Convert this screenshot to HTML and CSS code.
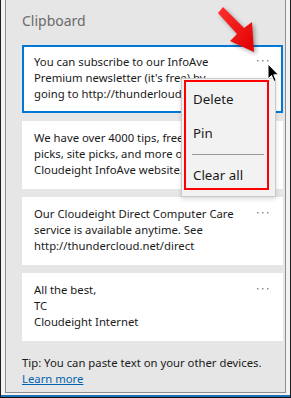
FILE: index.html
```html
<!DOCTYPE html>
<html lang="en">
<head>
  <meta charset="UTF-8">
  <title>Clipboard</title>
  <link rel="stylesheet" href="styles.css">
</head>
<body>
  <div class="screen">
    <div class="panel">
      <h1>Clipboard</h1>

      <!-- clipboard history -->
      <div class="items">
        <div class="item selected">
          <p>You can subscribe to our InfoAve Premium newsletter (it's free) by going to <span class="url">http://thunderloud.net/infoave/newsletter/</span></p>
          <span class="more"><svg width="12" height="2" viewBox="0 0 12 2"><rect x="0" y="0" width="1.5" height="1.5"/><rect x="5" y="0" width="1.5" height="1.5"/><rect x="10" y="0" width="1.5" height="1.5"/></svg></span>
        </div>
        <div class="item">
          <p>We have over 4000 tips, freeware picks, site picks, and more on our Cloudeight InfoAve website.</p>
          <span class="more"><svg width="12" height="2" viewBox="0 0 12 2"><rect x="0" y="0" width="1.5" height="1.5"/><rect x="5" y="0" width="1.5" height="1.5"/><rect x="10" y="0" width="1.5" height="1.5"/></svg></span>
        </div>
        <div class="item">
          <p>Our Cloudeight Direct Computer Care service is available anytime. See http://thundercloud.net/direct</p>
          <span class="more"><svg width="12" height="2" viewBox="0 0 12 2"><rect x="0" y="0" width="1.5" height="1.5"/><rect x="5" y="0" width="1.5" height="1.5"/><rect x="10" y="0" width="1.5" height="1.5"/></svg></span>
        </div>
        <div class="item">
          <p>All the best,<br>TC<br>Cloudeight Internet</p>
          <span class="more"><svg width="12" height="2" viewBox="0 0 12 2"><rect x="0" y="0" width="1.5" height="1.5"/><rect x="5" y="0" width="1.5" height="1.5"/><rect x="10" y="0" width="1.5" height="1.5"/></svg></span>
        </div>
      </div>

      <p class="tip">Tip: You can paste text on your other devices.<br><a href="#">Learn more</a></p>
    </div>
    <div class="taskbar"></div>

    <!-- context menu -->
    <div class="menu">
      <div class="menu-list">
        <div class="menu-item">Delete</div>
        <div class="menu-item">Pin</div>
        <div class="menu-sep"></div>
        <div class="menu-item">Clear all</div>
      </div>
    </div>

    <!-- annotation arrow + mouse pointer -->
    <svg class="arrow" width="48" height="58" viewBox="0 0 48 58">
      <defs>
        <linearGradient id="red" x1="0" y1="0" x2="1" y2="1">
          <stop offset="0" stop-color="#ff3030"/>
          <stop offset="1" stop-color="#e00000"/>
        </linearGradient>
      </defs>
      <polygon points="5,13 10,7 31,28 39,22 41,52 17,41 24,34" fill="url(#red)"/>
    </svg>
    <svg class="pointer" width="13" height="20" viewBox="0 0 13 20">
      <path d="M1 1 L1 16 L4.5 12.5 L7 18.5 L9.2 17.6 L6.8 11.8 L11.5 11.8 Z" fill="#000" stroke="#fff" stroke-width="1"/>
    </svg>
  </div>
</body>
</html>
```

FILE: styles.css
```css
body {
  margin: 0;
  font-family: "Noto Sans", "Open Sans", sans-serif;
  background-color: #f0f0f0;
}

.screen {
  position: relative;
  width: 291px;
  height: 398px;
  box-sizing: border-box;
  padding: 0 4px;
  border-left: 1px solid #1c1c1c;
  border-right: 1px solid #1c1c1c;
  border-bottom: 1px solid #111;
  background-color: #f2f2f2;
  display: flex;
  flex-direction: column;
  overflow: hidden;
}

.panel {
  flex: 1;
  background-color: #e6e6e6;
  border: 1px solid #8e8e8e;
  border-top: none;
  padding: 11px 2px 0 16px;
}

.taskbar {
  height: 2px;
  margin: 2px -4px 0;
  background-color: #1f6fb5;
}

h1 {
  margin: 0 0 14px 0;
  font-size: 14px;
  line-height: 20px;
  font-weight: 400;
  color: #6b6b6b;
}

.items {
  display: flex;
  flex-direction: column;
  gap: 8px;
}

.item {
  display: flex;
  align-items: flex-start;
  height: 68px;
  box-sizing: border-box;
  padding: 7px 12px 0 10px;
  border: 2px solid transparent;
  background-color: #fff;
}

.item.selected {
  border-color: #0078d7;
}

.item p {
  flex: 1;
  margin: 0;
  max-height: 48px;
  overflow: hidden;
  font-size: 11.3px;
  line-height: 16px;
  color: #1a1a1a;
}

.url {
  word-break: break-all;
}

.more {
  display: flex;
  margin: 6px 0 0 20px;
  fill: #8a8a8a;
}

.tip {
  margin: 14px 0 0 0;
  font-size: 11.3px;
  line-height: 16px;
  color: #1a1a1a;
}

.tip a {
  color: #0063b1;
}

.menu {
  position: absolute;
  left: 180px;
  top: 78px;
  width: 95px;
  box-sizing: border-box;
  padding: 1px 6px 6px 2px;
  background-color: #f2f2f2;
  border: 1px solid #cacaca;
  box-shadow: 0 2px 4px rgba(0,0,0,0.15);
}

.menu-list {
  border: 2px solid #ff0000;
  height: 106px;
}

.menu-item {
  padding: 7px 7px;
  font-size: 13.3px;
  line-height: 20px;
  color: #1a1a1a;
}

.menu-item:last-child {
  padding-bottom: 2px;
}

.menu-sep {
  height: 1px;
  margin: 4px 3px 3px 6px;
  background-color: #999;
}

.arrow {
  position: absolute;
  left: 212px;
  top: 0;
  filter: drop-shadow(2px 2px 2px rgba(0,0,0,0.35));
}

.pointer {
  position: absolute;
  left: 266px;
  top: 63px;
}
```
